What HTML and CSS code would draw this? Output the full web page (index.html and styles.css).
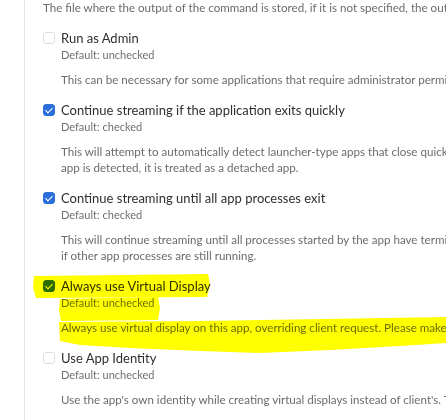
FILE: index.html
```html
<!DOCTYPE html>
<html lang="en">
<head>
    <meta charset="UTF-8">
    <meta name="viewport" content="width=device-width, initial-scale=1.0">
    <title>App Options</title>
    <link rel="stylesheet" href="styles.css">
</head>
<body>
    <!-- Options panel -->
    <div class="panel">
        <p class="desc first">The file where the output of the command is stored, if it is not specified, the output is ignored</p>

        <div class="option">
            <label class="check-row"><span class="box"></span>Run as Admin</label>
            <div class="default">Default: unchecked</div>
            <p class="desc">This can be necessary for some applications that require administrator permissions to run properly.</p>
        </div>

        <div class="option">
            <label class="check-row"><span class="box checked"></span>Continue streaming if the application exits quickly</label>
            <div class="default">Default: checked</div>
            <p class="desc">This will attempt to automatically detect launcher-type apps that close quickly after launch. When a launcher-type<br>app is detected, it is treated as a detached app.</p>
        </div>

        <div class="option">
            <label class="check-row"><span class="box checked"></span>Continue streaming until all app processes exit</label>
            <div class="default">Default: checked</div>
            <p class="desc">This will continue streaming until all processes started by the app have terminated. The stream won't end<br>if other app processes are still running.</p>
        </div>

        <div class="option">
            <label class="check-row"><span class="box checked"></span>Always use Virtual Display</label>
            <div class="default">Default: unchecked</div>
            <p class="desc">Always use virtual display on this app, overriding client request. Please make sure the driver is installed.</p>
        </div>

        <div class="option">
            <label class="check-row"><span class="box"></span>Use App Identity</label>
            <div class="default">Default: unchecked</div>
            <p class="desc">Use the app's own identity while creating virtual displays instead of client's. This is useful</p>
        </div>
    </div>

    <!-- Highlighter marks drawn over the page -->
    <svg class="marker" width="446" height="420" viewBox="0 0 446 420">
        <path d="M34 276 L208 274 L210 285 L207 297 L36 298 L33 287 Z"/>
        <path d="M60 299 L158 297 L160 308 L158 320 L61 321 L59 310 Z"/>
        <path d="M59 322 L200 321 L446 317 L446 343 L400 346 L330 350 L260 353 L200 351 L130 348 L80 345 L60 341 Z"/>
    </svg>
</body>
</html>
```

FILE: styles.css
```css
/* General Reset */
* {
    margin: 0;
    padding: 0;
    box-sizing: border-box;
    font-family: 'Lato', sans-serif;
}

body {
    overflow: hidden;
    width: 446px;
    height: 420px;
    background: #fff;
    position: relative;
}

/* Panel */
.panel {
    margin-left: 24px;
    border-left: 1px solid #e4e4e4;
    padding-left: 18px;
    min-height: 420px;
    overflow: hidden;
}

.desc {
    font-size: 11.6px;
    line-height: 16px;
    color: #6b6b6b;
    white-space: nowrap;
    margin-left: 18px;
    margin-top: 9px;
}

.desc.first {
    margin: 0;
}

.option {
    margin-top: 13px;
}

.check-row {
    display: flex;
    align-items: center;
    gap: 6px;
    font-size: 13px;
    line-height: 18px;
    color: #2f2f2f;
    white-space: nowrap;
}

.box {
    width: 12px;
    height: 12px;
    border: 1px solid #dedede;
    border-radius: 3px;
    background: #fff;
    flex-shrink: 0;
    position: relative;
}

.box.checked {
    background: #2c6fdb;
    border-color: #2c6fdb;
}

.box.checked:after {
    content: '';
    position: absolute;
    left: 3px;
    top: 1px;
    width: 3px;
    height: 6px;
    border: solid #fff;
    border-width: 0 1.5px 1.5px 0;
    transform: rotate(45deg);
}

.default {
    font-size: 11px;
    line-height: 16px;
    color: #707070;
    margin-left: 18px;
}

/* Highlighter */
.marker {
    position: absolute;
    top: 0;
    left: 0;
    pointer-events: none;
    mix-blend-mode: multiply;
}

.marker path {
    fill: #ffff00;
}
```
